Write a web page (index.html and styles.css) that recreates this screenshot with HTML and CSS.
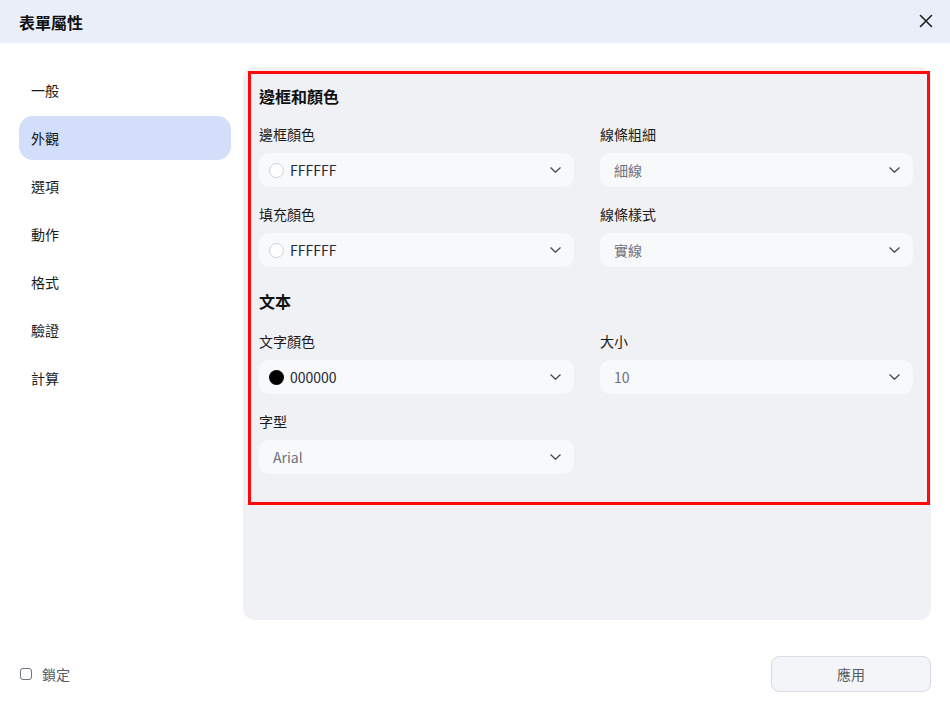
FILE: index.html
```html
<!DOCTYPE html>
<html lang="zh-Hant">
<head>
<meta charset="utf-8">
<title>表單屬性</title>
<link rel="stylesheet" href="styles.css">
</head>
<body>
<div class="dialog">
  <header class="header">
    <h1 class="title">表單屬性</h1>
    <button class="close" aria-label="close">
      <svg width="14" height="14" viewBox="0 0 14 14"><path d="M1.5 1.5L12.5 12.5M12.5 1.5L1.5 12.5" stroke="#1f1f1f" stroke-width="1.6" stroke-linecap="round"/></svg>
    </button>
  </header>
  <div class="main">
    <nav class="sidebar">
      <div class="nav-item">一般</div>
      <div class="nav-item active">外觀</div>
      <div class="nav-item">選項</div>
      <div class="nav-item">動作</div>
      <div class="nav-item">格式</div>
      <div class="nav-item">驗證</div>
      <div class="nav-item">計算</div>
    </nav>
    <section class="panel">
      <div class="section">
        <h2 class="heading">邊框和顏色</h2>
        <div class="grid">
          <div class="field">
            <div class="label">邊框顏色</div>
            <div class="select color"><span class="swatch white"></span><span class="value dark">FFFFFF</span><svg class="chev" width="11" height="6" viewBox="0 0 11 6"><path d="M0.8 0.8L5.5 5.2L10.2 0.8" fill="none" stroke="#444" stroke-width="1.2" stroke-linecap="round" stroke-linejoin="round"/></svg></div>
          </div>
          <div class="field">
            <div class="label">線條粗細</div>
            <div class="select"><span class="value">細線</span><svg class="chev" width="11" height="6" viewBox="0 0 11 6"><path d="M0.8 0.8L5.5 5.2L10.2 0.8" fill="none" stroke="#444" stroke-width="1.2" stroke-linecap="round" stroke-linejoin="round"/></svg></div>
          </div>
          <div class="field">
            <div class="label">填充顏色</div>
            <div class="select color"><span class="swatch white"></span><span class="value dark">FFFFFF</span><svg class="chev" width="11" height="6" viewBox="0 0 11 6"><path d="M0.8 0.8L5.5 5.2L10.2 0.8" fill="none" stroke="#444" stroke-width="1.2" stroke-linecap="round" stroke-linejoin="round"/></svg></div>
          </div>
          <div class="field">
            <div class="label">線條樣式</div>
            <div class="select"><span class="value">實線</span><svg class="chev" width="11" height="6" viewBox="0 0 11 6"><path d="M0.8 0.8L5.5 5.2L10.2 0.8" fill="none" stroke="#444" stroke-width="1.2" stroke-linecap="round" stroke-linejoin="round"/></svg></div>
          </div>
        </div>
        <h2 class="heading second">文本</h2>
        <div class="grid">
          <div class="field">
            <div class="label">文字顏色</div>
            <div class="select color"><span class="swatch black"></span><span class="value dark">000000</span><svg class="chev" width="11" height="6" viewBox="0 0 11 6"><path d="M0.8 0.8L5.5 5.2L10.2 0.8" fill="none" stroke="#444" stroke-width="1.2" stroke-linecap="round" stroke-linejoin="round"/></svg></div>
          </div>
          <div class="field">
            <div class="label">大小</div>
            <div class="select"><span class="value">10</span><svg class="chev" width="11" height="6" viewBox="0 0 11 6"><path d="M0.8 0.8L5.5 5.2L10.2 0.8" fill="none" stroke="#444" stroke-width="1.2" stroke-linecap="round" stroke-linejoin="round"/></svg></div>
          </div>
          <div class="field">
            <div class="label">字型</div>
            <div class="select"><span class="value">Arial</span><svg class="chev" width="11" height="6" viewBox="0 0 11 6"><path d="M0.8 0.8L5.5 5.2L10.2 0.8" fill="none" stroke="#444" stroke-width="1.2" stroke-linecap="round" stroke-linejoin="round"/></svg></div>
          </div>
        </div>
      </div>
    </section>
  </div>
  <footer class="footer">
    <label class="lock"><span class="checkbox"></span><span class="lock-text">鎖定</span></label>
    <button class="apply">應用</button>
  </footer>
</div>
</body>
</html>
```
FILE: styles.css
```css
* { box-sizing: border-box; }
html, body { margin: 0; padding: 0; background: #ffffff; }
body {
  font-family: "Noto Sans CJK TC", "Noto Sans", sans-serif;
  color: #1a1a1a;
  width: 950px;
  height: 707px;
  overflow: hidden;
}
.dialog { width: 950px; height: 707px; display: flex; flex-direction: column; }
.header {
  height: 43px;
  background: #eaeef9;
  display: flex;
  align-items: center;
  justify-content: space-between;
  padding: 0 12px 0 19px;
}
.title { margin: 0; font-size: 16px; font-weight: 700; line-height: 24px; color: #111; }
.close {
  border: 0; background: transparent; padding: 0; width: 24px; height: 24px;
  display: flex; align-items: center; justify-content: center; cursor: pointer;
  margin-top: -2px;
}
.main {
  display: flex;
  gap: 12px;
  padding: 24px 19px 0 19px;
}
.sidebar {
  width: 212px;
  display: flex;
  flex-direction: column;
  gap: 4px;
  padding-top: 1px;
}
.nav-item {
  height: 44px;
  line-height: 44px;
  padding-left: 12px;
  font-size: 14px;
  color: #1a1a1a;
  border-radius: 14px;
}
.nav-item.active { background: #d3defa; }
.panel {
  flex: 1;
  height: 553px;
  background: #f0f1f5;
  border-radius: 12px;
  padding: 4px 1px 0 5px;
}
.section {
  border: 3px solid #ff0a0a;
  padding: 10px 14px 28px 8px;
}
.heading {
  margin: 0 0 16px 0;
  font-size: 16px;
  line-height: 24px;
  font-weight: 700;
  color: #111;
}
.heading.second { margin-top: 22px; margin-bottom: 18px; }
.grid {
  display: grid;
  grid-template-columns: 315px 313px;
  column-gap: 26px;
  row-gap: 17px;
}
.label {
  font-size: 14px;
  line-height: 20px;
  color: #1a1a1a;
  margin-bottom: 9px;
}
.select {
  height: 34px;
  background: #f8f9fb;
  border-radius: 10px;
  display: flex;
  align-items: center;
  padding: 0 13px 0 14px;
}
.select.color { padding-left: 10px; }
.swatch {
  width: 15px; height: 15px; border-radius: 50%;
  margin-right: 6px; flex: none;
}
.swatch.white { background: #fff; border: 1px solid #cfd1d6; }
.swatch.black { background: #000; }
.value {
  flex: 1;
  font-size: 14px;
  line-height: 20px;
  color: #6b7280;
}
.value.dark { color: #1f2937; }
.chev { flex: none; }
.footer {
  margin-top: 36px;
  height: 36px;
  display: flex;
  align-items: center;
  justify-content: space-between;
  padding: 0 19px 0 20px;
}
.lock { display: flex; align-items: center; gap: 10px; }
.checkbox {
  width: 12px; height: 12px;
  border: 1.5px solid #6b7280;
  border-radius: 3px;
  background: #fff;
}
.lock-text { font-size: 14px; color: #555c66; line-height: 18px; }
.apply {
  width: 160px;
  height: 36px;
  border: 1px solid #d9dbe6;
  border-radius: 8px;
  background: #f4f5f9;
  font-family: inherit;
  font-size: 14px;
  color: #555c66;
}
```
